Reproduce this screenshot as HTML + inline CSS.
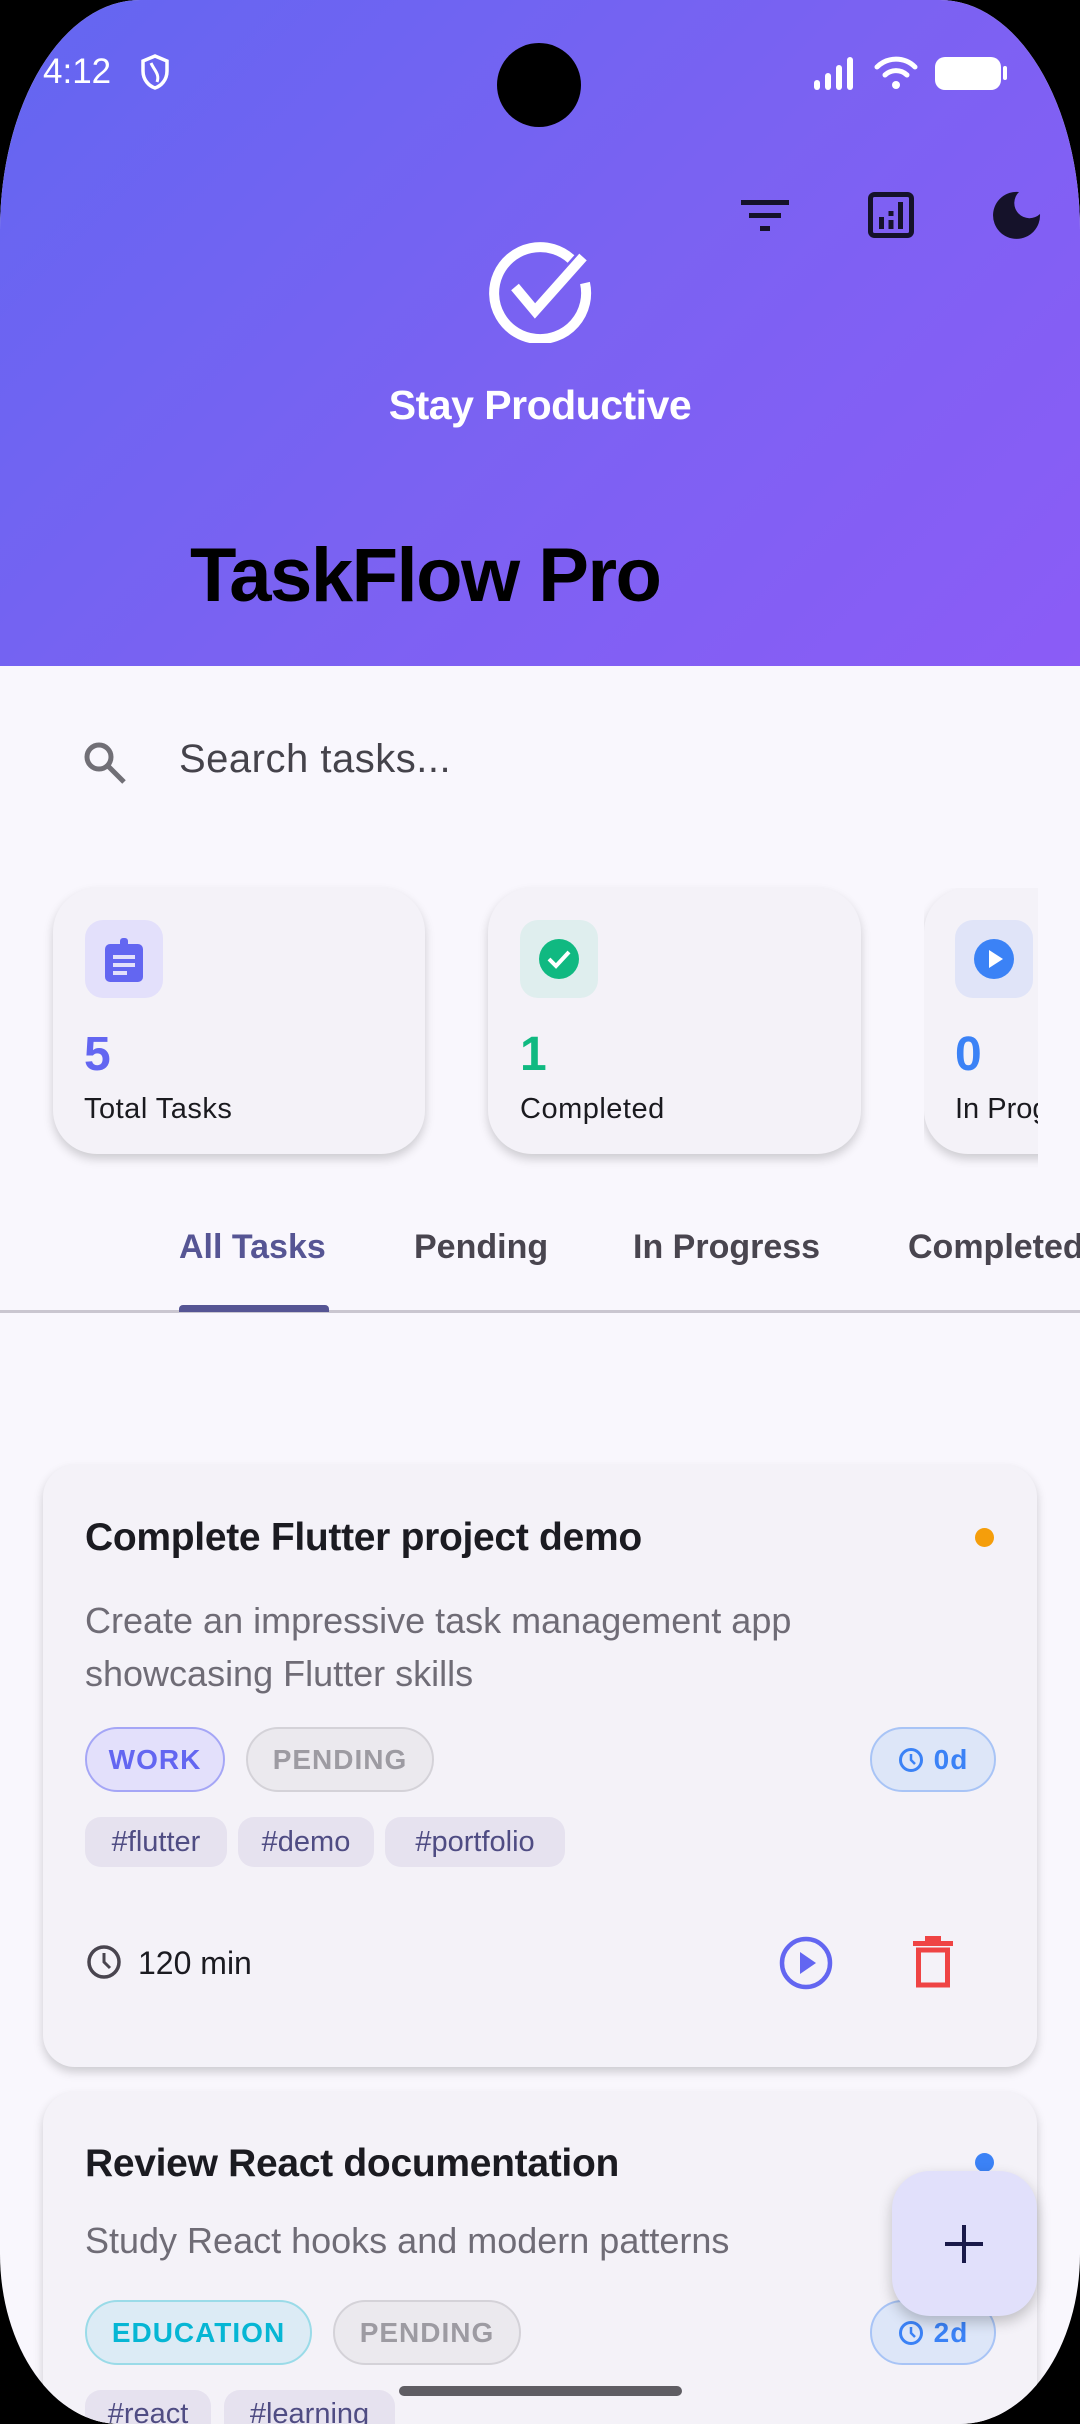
<!DOCTYPE html>
<html><head><meta charset="utf-8"><style>
*{margin:0;padding:0;box-sizing:border-box}
body{width:1080px;height:2424px;background:#000;font-family:"Liberation Sans",sans-serif;overflow:hidden}
#scr{position:absolute;left:0;top:0;width:1080px;height:2424px;background:#f9f7fd;border-radius:140px 140px 120px 120px / 230px 230px 170px 170px;overflow:hidden}
.abs{position:absolute}
.hdr{left:0;top:0;width:1080px;height:666px;background:linear-gradient(135deg,#6366f1 0%,#7a62f2 50%,#8b5cf6 100%)}
.card{background:#f4f2f8;box-shadow:0 5px 10px rgba(0,0,0,.18)}
.chip{position:absolute;height:65px;border-radius:33px;font-weight:bold;font-size:28px;letter-spacing:1px;display:flex;align-items:center;justify-content:center;border:2px solid}
.tag{position:absolute;height:50px;border-radius:16px;background:#e6e2ef;color:#4f4c83;font-size:29px;display:flex;align-items:center;justify-content:center}
</style></head><body>
<div id="scr">
<div class="abs hdr"></div>
<div class="abs" style="left:43px;top:52px;color:#fff;font-size:35px">4:12</div>
<svg class="abs" style="left:140px;top:54px" width="30" height="36" viewBox="0 0 30 36"><path d="M15 2 L27 7 V17 C27 26 21 32 15 34 C9 32 3 26 3 17 V7 Z" fill="none" stroke="#fff" stroke-width="3.5"/><path d="M11 9 C14 16 20 20 17 28" fill="none" stroke="#fff" stroke-width="3"/></svg>
<div class="abs" style="left:497px;top:43px;width:84px;height:84px;border-radius:50%;background:#000"></div>
<svg class="abs" style="left:812px;top:56px" width="50" height="34"><rect x="2" y="24" width="6" height="10" rx="3" fill="#fff"/><rect x="13" y="17" width="6" height="17" rx="3" fill="#fff"/><rect x="24" y="9" width="6" height="25" rx="3" fill="#fff"/><rect x="35" y="1" width="6" height="33" rx="3" fill="#fff"/></svg>
<svg class="abs" style="left:874px;top:54px" width="44" height="38" viewBox="0 0 44 38"><path d="M3 13 A27 27 0 0 1 41 13" fill="none" stroke="#fff" stroke-width="5" stroke-linecap="round"/><path d="M11 21 A16 16 0 0 1 33 21" fill="none" stroke="#fff" stroke-width="5" stroke-linecap="round"/><circle cx="22" cy="31" r="4" fill="#fff"/></svg>
<div class="abs" style="left:935px;top:57px;width:66px;height:33px;border-radius:10px;background:#fff"></div>
<div class="abs" style="left:1003px;top:66px;width:4px;height:14px;border-radius:2px;background:#fff"></div>
<svg class="abs" style="left:741px;top:200px" width="48" height="31"><rect x="0" y="0" width="48" height="5" fill="#15122a"/><rect x="8" y="13" width="32" height="5" fill="#15122a"/><rect x="19" y="26" width="10" height="5" fill="#15122a"/></svg>
<svg class="abs" style="left:868px;top:192px" width="46" height="46"><rect x="2.5" y="2.5" width="41" height="41" rx="4" fill="none" stroke="#15122a" stroke-width="5"/><rect x="11" y="25" width="5" height="12" fill="#15122a"/><rect x="20.5" y="19" width="5" height="5" fill="#15122a"/><rect x="20.5" y="28" width="5" height="9" fill="#15122a"/><rect x="30" y="10" width="5" height="27" fill="#15122a"/></svg>
<svg class="abs" style="left:993px;top:191px" width="48" height="48" viewBox="0 0 48 48"><path d="M26 1 A23.5 23.5 0 1 0 47 23 A13 13 0 0 1 26 1 Z" fill="#15122a"/></svg>
<svg class="abs" style="left:487px;top:235px" width="108" height="108" viewBox="0 0 108 108"><path d="M84 24 A46 46 0 1 0 98 48" fill="none" stroke="#fff" stroke-width="10"/><path d="M28 52 L48 76 L96 22" fill="none" stroke="#fff" stroke-width="10"/></svg>
<div class="abs" style="left:0;width:1080px;top:382px;text-align:center;color:#fff;font-size:41px;font-weight:bold;letter-spacing:-0.5px">Stay Productive</div>
<div class="abs" style="left:190px;top:532px;color:#000;font-size:76px;font-weight:bold;letter-spacing:-1.5px">TaskFlow Pro</div>
<svg class="abs" style="left:80px;top:738px" width="48" height="48" viewBox="0 0 48 48"><circle cx="19" cy="19" r="12" fill="none" stroke="#716f76" stroke-width="5"/><path d="M28 28 L44 44" stroke="#716f76" stroke-width="5"/></svg>
<div class="abs" style="left:179px;top:737px;color:#45434b;font-size:40px;letter-spacing:0.5px">Search tasks...</div>
<div class="abs card" style="left:53px;top:888px;width:372px;height:266px;border-radius:44px"></div>
<div class="abs" style="left:85px;top:920px;width:78px;height:78px;border-radius:18px;background:#e3e0fb"></div>
<svg class="abs" style="left:105px;top:938px" width="38" height="44" viewBox="0 0 38 44"><rect x="0" y="6" width="38" height="38" rx="5" fill="#6366f1"/><rect x="15" y="0" width="8" height="10" rx="3" fill="#6366f1"/><rect x="8" y="17" width="22" height="4" fill="#e3e0fb"/><rect x="8" y="25" width="22" height="4" fill="#e3e0fb"/><rect x="8" y="33" width="14" height="4" fill="#e3e0fb"/></svg>
<div class="abs" style="left:84px;top:1027px;color:#6366f1;font-size:48px;font-weight:bold">5</div>
<div class="abs" style="left:84px;top:1093px;color:#1a1a1f;font-size:29px;letter-spacing:0.5px">Total Tasks</div>
<div class="abs card" style="left:488px;top:888px;width:373px;height:266px;border-radius:44px"></div>
<div class="abs" style="left:520px;top:920px;width:78px;height:78px;border-radius:18px;background:#dfeeee"></div>
<svg class="abs" style="left:539px;top:939px" width="40" height="40"><circle cx="20" cy="20" r="20" fill="#10b981"/><path d="M10 20 L17 27 L30 13" fill="none" stroke="#fff" stroke-width="4"/></svg>
<div class="abs" style="left:520px;top:1027px;color:#10b981;font-size:48px;font-weight:bold">1</div>
<div class="abs" style="left:520px;top:1093px;color:#1a1a1f;font-size:29px;letter-spacing:0.5px">Completed</div>
<div class="abs" style="left:924px;top:888px;width:114px;height:280px;overflow:hidden">
<div class="abs card" style="left:0;top:0;width:372px;height:266px;border-radius:44px"></div>
<div class="abs" style="left:31px;top:32px;width:78px;height:78px;border-radius:18px;background:#e0e4f8"></div>
<svg class="abs" style="left:50px;top:51px" width="40" height="40"><circle cx="20" cy="20" r="20" fill="#3b82f6"/><path d="M15 11 L29 20 L15 29 Z" fill="#fff"/></svg>
<div class="abs" style="left:31px;top:139px;color:#3b82f6;font-size:48px;font-weight:bold">0</div>
<div class="abs" style="left:31px;top:205px;color:#1a1a1f;font-size:29px;white-space:nowrap">In Progress</div>
</div>
<div class="abs" style="left:179px;top:1228px;color:#565594;font-size:34px;font-weight:bold">All Tasks</div>
<div class="abs" style="left:414px;top:1228px;color:#49454f;font-size:34px;font-weight:bold">Pending</div>
<div class="abs" style="left:633px;top:1228px;color:#49454f;font-size:34px;font-weight:bold">In Progress</div>
<div class="abs" style="left:908px;top:1228px;color:#49454f;font-size:34px;font-weight:bold;white-space:nowrap">Completed</div>
<div class="abs" style="left:0;top:1310px;width:1080px;height:3px;background:#cac6d0"></div>
<div class="abs" style="left:179px;top:1305px;width:150px;height:7px;border-radius:4px 4px 0 0;background:#565594"></div>
<div class="abs card" style="left:43px;top:1465px;width:994px;height:602px;border-radius:32px"></div>
<div class="abs" style="left:85px;top:1516px;color:#1b1b21;font-size:39px;font-weight:bold;letter-spacing:-0.3px">Complete Flutter project demo</div>
<div class="abs" style="left:975px;top:1528px;width:19px;height:19px;border-radius:50%;background:#f59e0b"></div>
<div class="abs" style="left:85px;top:1594px;color:#6f6c76;font-size:36px;line-height:53px;width:840px">Create an impressive task management app showcasing Flutter skills</div>
<div class="chip" style="left:85px;top:1727px;width:140px;background:#e3e0fb;border-color:#a5a6f6;color:#6366f1">WORK</div>
<div class="chip" style="left:246px;top:1727px;width:188px;background:#ebe9ee;border-color:#d4d2d8;color:#9d9ba2">PENDING</div>
<div class="chip" style="left:870px;top:1727px;width:126px;background:#dde6f8;border-color:#a8c4f6;color:#3b82f6"><svg width="26" height="26" style="margin-right:10px"><circle cx="13" cy="13" r="10.5" fill="none" stroke="#3b82f6" stroke-width="3"/><path d="M13 7 V13 L17 17" fill="none" stroke="#3b82f6" stroke-width="2.5"/></svg>0d</div>
<div class="tag" style="left:85px;top:1817px;width:142px">#flutter</div>
<div class="tag" style="left:238px;top:1817px;width:136px">#demo</div>
<div class="tag" style="left:385px;top:1817px;width:180px">#portfolio</div>
<svg class="abs" style="left:86px;top:1944px" width="36" height="36"><circle cx="18" cy="18" r="15" fill="none" stroke="#49454f" stroke-width="3.5"/><path d="M18 9 V18 L24 24" fill="none" stroke="#49454f" stroke-width="3"/></svg>
<div class="abs" style="left:138px;top:1945px;color:#1b1b21;font-size:32px">120 min</div>
<svg class="abs" style="left:779px;top:1936px" width="54" height="54"><circle cx="27" cy="27" r="24" fill="none" stroke="#6366f1" stroke-width="4.5"/><path d="M21 16 L37 27 L21 38 Z" fill="#6366f1"/></svg>
<svg class="abs" style="left:913px;top:1936px" width="40" height="52" viewBox="0 0 40 52"><rect x="12" y="0" width="16" height="5" fill="#ef4444"/><rect x="0" y="5" width="40" height="5" fill="#ef4444"/><rect x="5.5" y="14" width="29" height="35" fill="none" stroke="#ef4444" stroke-width="5"/></svg>
<div class="abs card" style="left:43px;top:2092px;width:994px;height:332px;border-radius:32px 32px 0 0"></div>
<div class="abs" style="left:85px;top:2142px;color:#1b1b21;font-size:39px;font-weight:bold;letter-spacing:-0.3px">Review React documentation</div>
<div class="abs" style="left:975px;top:2153px;width:19px;height:19px;border-radius:50%;background:#3b82f6"></div>
<div class="abs" style="left:85px;top:2220px;color:#6f6c76;font-size:36px">Study React hooks and modern patterns</div>
<div class="chip" style="left:85px;top:2300px;width:227px;background:#dcebf5;border-color:#9adbe8;color:#06b6d4">EDUCATION</div>
<div class="chip" style="left:333px;top:2300px;width:188px;background:#ebe9ee;border-color:#d4d2d8;color:#9d9ba2">PENDING</div>
<div class="chip" style="left:870px;top:2300px;width:126px;background:#dde6f8;border-color:#a8c4f6;color:#3b82f6"><svg width="26" height="26" style="margin-right:10px"><circle cx="13" cy="13" r="10.5" fill="none" stroke="#3b82f6" stroke-width="3"/><path d="M13 7 V13 L17 17" fill="none" stroke="#3b82f6" stroke-width="2.5"/></svg>2d</div>
<div class="tag" style="left:85px;top:2390px;width:126px;height:34px;align-items:flex-start;padding-top:8px;border-radius:16px 16px 0 0">#react</div>
<div class="tag" style="left:224px;top:2390px;width:171px;height:34px;align-items:flex-start;padding-top:8px;border-radius:16px 16px 0 0">#learning</div>
<div class="abs" style="left:892px;top:2171px;width:145px;height:145px;border-radius:38px;background:#e1e0fb;box-shadow:0 6px 14px rgba(0,0,0,.22)"></div>
<div class="abs" style="left:945px;top:2242px;width:38px;height:4px;background:#1a1a4a"></div>
<div class="abs" style="left:962px;top:2225px;width:4px;height:38px;background:#1a1a4a"></div>
<div class="abs" style="left:399px;top:2386px;width:283px;height:10px;border-radius:5px;background:#5f5d63"></div>
</div>
</body></html>
